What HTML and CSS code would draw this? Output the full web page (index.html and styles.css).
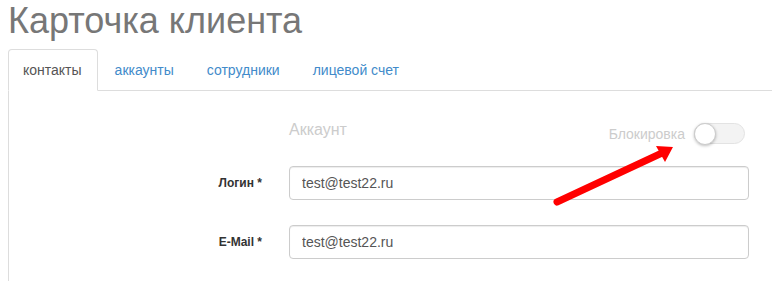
FILE: index.html
```html
<!DOCTYPE html>
<html lang="ru">
<head>
    <meta charset="UTF-8">
    <meta name="viewport" content="width=device-width, initial-scale=1.0">
    <title>Карточка клиента</title>
    <link rel="stylesheet" href="styles.css">
</head>
<body>
    <h1 class="page-title">Карточка клиента</h1>

    <ul class="nav-tabs">
        <li class="active"><a href="#">контакты</a></li>
        <li><a href="#">аккаунты</a></li>
        <li><a href="#">сотрудники</a></li>
        <li><a href="#">лицевой счет</a></li>
    </ul>

    <div class="tab-content">
        <div class="form-row head-row">
            <div></div>
            <div class="account-head">
                <span class="account-title">Аккаунт</span>
                <label class="lock">
                    <span>Блокировка</span>
                    <span class="switch"><span class="knob"></span></span>
                </label>
            </div>
        </div>

        <div class="form-row">
            <label for="login" class="field-label">Логин *</label>
            <input type="text" id="login" class="field" value="test@test22.ru">
        </div>

        <div class="form-row">
            <label for="email" class="field-label">E-Mail *</label>
            <input type="text" id="email" class="field" value="test@test22.ru">
        </div>
    </div>

    <svg class="arrow" width="772" height="281" viewBox="0 0 772 281">
        <line x1="557" y1="202" x2="662" y2="153" stroke="#f00" stroke-width="7" stroke-linecap="round"/>
        <polygon points="673,147 656,146 665,162" fill="#f00"/>
    </svg>
</body>
</html>
```

FILE: styles.css
```css
body {
    margin: 0;
    padding: 0 0 0 8px;
    font-family: "Liberation Sans", Arial, sans-serif;
    font-size: 14px;
    color: #333;
    background-color: #fff;
    position: relative;
    overflow: hidden;
    height: 281px;
}
.page-title {
    margin: 1px 0 8px 0;
    font-size: 36px;
    font-weight: normal;
    line-height: 40px;
    color: #777;
}
.nav-tabs {
    display: flex;
    list-style: none;
    margin: 0;
    padding: 0;
    border-bottom: 1px solid #ddd;
}
.nav-tabs li {
    margin-bottom: -1px;
    margin-right: 2px;
}
.nav-tabs a {
    display: block;
    padding: 10px 15px 10px 14px;
    line-height: 20px;
    border: 1px solid transparent;
    border-radius: 4px 4px 0 0;
    color: #428bca;
    text-decoration: none;
}
.nav-tabs .active a {
    color: #555;
    background-color: #fff;
    border-color: #ddd #ddd transparent;
}
.tab-content {
    border-left: 1px solid #ddd;
    padding-top: 29px;
    height: 161px;
}
.form-row {
    display: grid;
    grid-template-columns: 253px 460px;
    column-gap: 27px;
    align-items: center;
    margin-bottom: 25px;
}
.head-row {
    align-items: start;
    margin-bottom: 22px;
}
.account-head {
    display: flex;
    justify-content: space-between;
    padding-right: 4px;
}
.account-title {
    font-size: 16px;
    line-height: 20px;
    color: #ccc;
}
.lock {
    display: flex;
    align-items: center;
    margin-top: 3px;
    color: #ccc;
    line-height: 20px;
}
.switch {
    position: relative;
    width: 49px;
    height: 19px;
    margin-left: 9px;
    border: 1px solid #e3e3e3;
    border-radius: 11px;
    background-color: #f3f3f3;
}
.knob {
    position: absolute;
    left: -1px;
    top: -1px;
    width: 20px;
    height: 20px;
    border-radius: 50%;
    background-color: #fff;
    border: 1px solid #ccc;
    box-shadow: 0 1px 3px rgba(0, 0, 0, 0.25);
}
.field-label {
    text-align: right;
    font-size: 12px;
    font-weight: bold;
    color: #333;
}
.field {
    height: 34px;
    box-sizing: border-box;
    padding: 6px 12px;
    font-family: "Liberation Sans", Arial, sans-serif;
    font-size: 14px;
    color: #555;
    border: 1px solid #ccc;
    border-radius: 4px;
    box-shadow: inset 0 1px 1px rgba(0, 0, 0, 0.075);
}
.arrow {
    position: absolute;
    left: 0;
    top: 0;
    pointer-events: none;
}
```
